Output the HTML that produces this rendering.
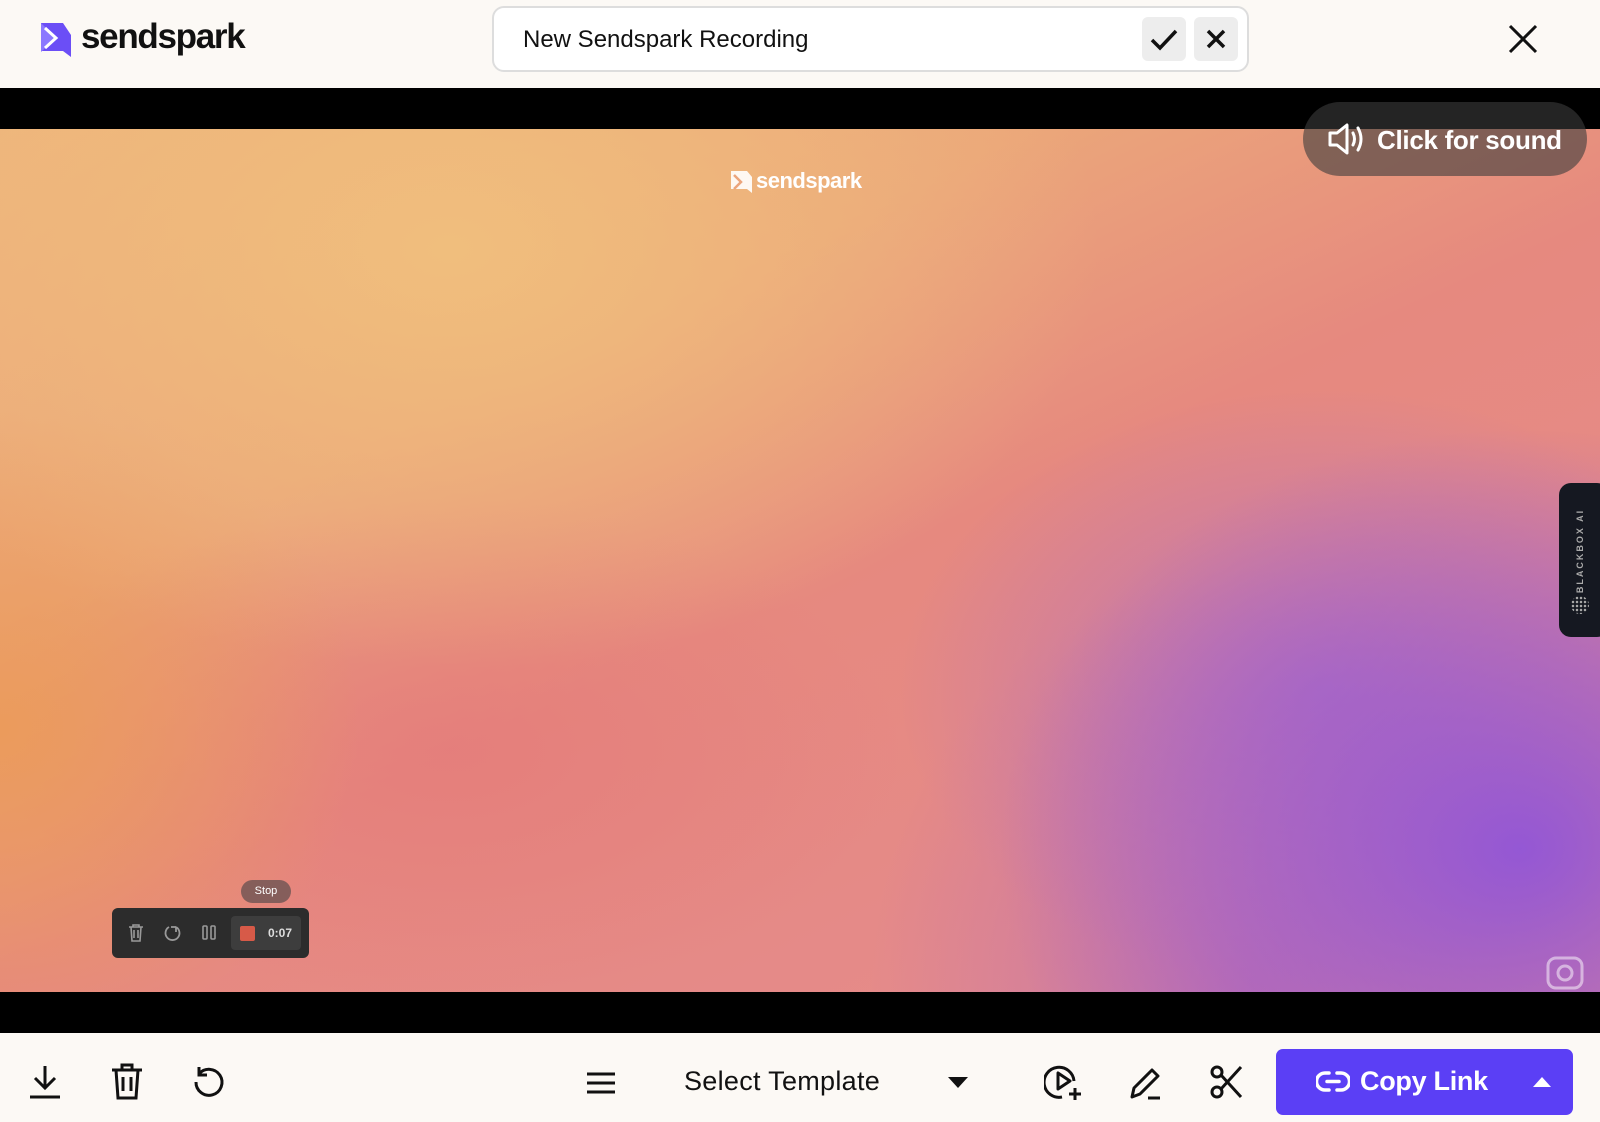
<!DOCTYPE html>
<html><head><meta charset="utf-8"><style>
*{margin:0;padding:0;box-sizing:border-box}
body{width:1600px;height:1122px;overflow:hidden;background:#fcf9f5;font-family:"Liberation Sans",sans-serif;position:relative}
.abs{position:absolute}
.hdr{left:0;top:0;width:1600px;height:88px;background:#fcf9f5}
.video{left:0;top:88px;width:1600px;height:945px;background:#000}
.grad{left:0;top:129px;width:1600px;height:863px;
background:
radial-gradient(ellipse 520px 420px at 1520px 720px,rgba(145,85,215,.95),rgba(150,90,210,0) 100%),
radial-gradient(ellipse 420px 300px at 1320px 560px,rgba(175,110,195,.8),rgba(175,110,195,0) 100%),
radial-gradient(ellipse 380px 420px at 1250px 860px,rgba(180,105,185,.7),rgba(180,105,185,0) 100%),
radial-gradient(ellipse 650px 420px at 450px 120px,rgba(240,190,125,1),rgba(240,190,125,0) 100%),
radial-gradient(ellipse 360px 320px at 0px 600px,rgba(235,155,90,.95),rgba(235,155,95,0) 100%),
radial-gradient(ellipse 450px 250px at 450px 620px,rgba(228,122,122,.7),rgba(228,125,128,0) 100%),
linear-gradient(155deg,#eeb47c 0%,#eba67a 30%,#e6897f 52%,#e58a88 75%,#e88f8c 100%)}
.bot{left:0;top:1033px;width:1600px;height:89px;background:#fcf9f5}
svg{position:absolute}
</style></head><body>
<div class="abs hdr"></div>
<svg style="left:40px;top:22px" width="32" height="36" viewBox="0 0 32 36"><path d="M1 1h22l8 12v22l-8-6H1z" fill="#6b4ef6"/><path d="M1 1l15 15L1 30z" fill="#8b78ff"/><path d="M5 6l11 10L5 26" fill="none" stroke="#fff" stroke-width="3"/></svg>
<div class="abs" style="left:81px;top:17px;font-size:35px;font-weight:bold;color:#111;letter-spacing:-1.3px">sendspark</div>
<div class="abs" style="left:492px;top:6px;width:757px;height:66px;border:2px solid #ddd;border-radius:12px;background:#fff"></div>
<div class="abs" style="left:523px;top:26px;font-size:24px;color:#111">New Sendspark Recording</div>
<div class="abs" style="left:1142px;top:17px;width:44px;height:44px;background:#ededed;border-radius:6px"></div>
<svg style="left:1149px;top:25px" width="30" height="30"><path d="M3 15l8 8L27 6" fill="none" stroke="#111" stroke-width="3.5"/></svg>
<div class="abs" style="left:1194px;top:17px;width:44px;height:44px;background:#ededed;border-radius:6px"></div>
<svg style="left:1205px;top:28px" width="22" height="22"><path d="M3 3l16 16M19 3L3 19" stroke="#111" stroke-width="3.5"/></svg>
<svg style="left:1508px;top:24px" width="30" height="30"><path d="M2 2l26 26M28 2L2 28" stroke="#111" stroke-width="3"/></svg>

<div class="abs video"></div>
<div class="abs grad"></div>
<svg style="left:731px;top:171px" width="22" height="22"><path d="M0 0h16l5 6v16l-5-4H0z" fill="#fff" opacity=".9"/><path d="M3 4l7 7-7 7" fill="none" stroke="#eba57c" stroke-width="2.5"/></svg>
<div class="abs" style="left:756px;top:168px;font-size:22px;font-weight:bold;color:#fff;letter-spacing:-0.5px">sendspark</div>
<div class="abs" style="left:1303px;top:102px;width:284px;height:74px;border-radius:37px;background:rgba(60,60,60,.6)"></div>
<svg style="left:1327px;top:121px" width="40" height="36" viewBox="0 0 40 36"><path d="M3 12h7l10-8v28l-10-8H3z" fill="none" stroke="#fff" stroke-width="3" stroke-linejoin="round"/><path d="M26 12q3 6 0 12M31 7q6 11 0 22" fill="none" stroke="#fff" stroke-width="3" stroke-linecap="round"/></svg>
<div class="abs" style="left:1377px;top:125px;font-size:26px;font-weight:bold;color:#fff;letter-spacing:-0.3px">Click for sound</div>
<div class="abs" style="left:1559px;top:483px;width:50px;height:154px;border-radius:12px;background:#151821"></div>
<div class="abs" style="left:1535px;top:546px;width:90px;font-size:9px;font-weight:bold;color:#aaa;letter-spacing:2px;transform:rotate(-90deg);text-align:center">BLACKBOX AI</div>
<div class="abs" style="left:1571px;top:596px;width:18px;height:18px;border-radius:50%;background:radial-gradient(circle,#aaa 1px,transparent 1.5px) 0 0/4px 4px"></div>
<svg style="left:1546px;top:956px" width="38" height="34"><rect x="2" y="2" width="34" height="30" rx="8" fill="none" stroke="rgba(255,255,255,.5)" stroke-width="3"/><circle cx="19" cy="17" r="7" fill="none" stroke="rgba(255,255,255,.5)" stroke-width="3"/></svg>

<div class="abs" style="left:241px;top:880px;width:50px;height:23px;border-radius:12px;background:rgba(100,80,80,.75);color:#fff;font-size:11px;text-align:center;line-height:23px">Stop</div>
<div class="abs" style="left:112px;top:908px;width:197px;height:50px;border-radius:6px;background:#2c2c2c"></div>
<div class="abs" style="left:231px;top:916px;width:70px;height:34px;border-radius:4px;background:#3d3d3d"></div>
<svg style="left:126px;top:923px" width="20" height="20"><path d="M3 4h14M7 4V2h6v2M5 4l1 14h8l1-14M8 7v8M12 7v8" fill="none" stroke="#999" stroke-width="1.6"/></svg>
<svg style="left:162px;top:923px" width="20" height="20"><path d="M14 4a7 7 0 1 1-7 0M14 4v5M14 4h-5" fill="none" stroke="#999" stroke-width="1.8"/></svg>
<svg style="left:200px;top:924px" width="18" height="18"><rect x="3" y="2" width="4" height="13" rx="1" fill="none" stroke="#999" stroke-width="1.6"/><rect x="11" y="2" width="4" height="13" rx="1" fill="none" stroke="#999" stroke-width="1.6"/></svg>
<div class="abs" style="left:240px;top:926px;width:15px;height:15px;background:#d75a48;border-radius:2px"></div>
<div class="abs" style="left:268px;top:926px;font-size:12px;font-weight:bold;color:#ddd">0:07</div>

<div class="abs bot"></div>
<svg style="left:28px;top:1064px" width="34" height="36"><path d="M17 2v22M7 14l10 10 10-10M2 33h30" fill="none" stroke="#111" stroke-width="3"/></svg>
<svg style="left:110px;top:1063px" width="34" height="38"><path d="M2 7h30M12 7V2h10v5M6 7l2 28h18l2-28M13 14v14M21 14v14" fill="none" stroke="#111" stroke-width="3"/></svg>
<svg style="left:191px;top:1064px" width="36" height="36"><path d="M8 10a13 13 0 1 1-3 8M8 3v8h8" fill="none" stroke="#111" stroke-width="3"/></svg>
<svg style="left:587px;top:1072px" width="28" height="22"><path d="M0 2h28M0 11h28M0 20h28" stroke="#111" stroke-width="3"/></svg>
<div class="abs" style="left:684px;top:1066px;font-size:27px;color:#111;letter-spacing:0.3px">Select Template</div>
<svg style="left:947px;top:1076px" width="22" height="14"><path d="M1 1h20L11 12z" fill="#111"/></svg>
<svg style="left:1044px;top:1062px" width="40" height="40"><path d="M30 19a15 15 0 1 0-12 16" fill="none" stroke="#111" stroke-width="3"/><path d="M14 11v16l12-8z" fill="none" stroke="#111" stroke-width="3" stroke-linejoin="round"/><path d="M31 26v12M25 32h12" stroke="#111" stroke-width="3"/></svg>
<svg style="left:1128px;top:1065px" width="36" height="36"><path d="M4 32l2-9L24 5l6 6-18 18zM20 33h12" fill="none" stroke="#111" stroke-width="3" stroke-linejoin="round"/></svg>
<svg style="left:1209px;top:1064px" width="36" height="36"><circle cx="8" cy="8" r="5" fill="none" stroke="#111" stroke-width="3"/><circle cx="8" cy="28" r="5" fill="none" stroke="#111" stroke-width="3"/><path d="M12 11l20 22M12 25L32 3" stroke="#111" stroke-width="3"/></svg>
<div class="abs" style="left:1276px;top:1049px;width:297px;height:66px;border-radius:7px;background:#5b3ff5"></div>
<svg style="left:1316px;top:1070px" width="34" height="24"><path d="M13 3H9a8.5 8.5 0 0 0 0 17h4M21 3h4a8.5 8.5 0 0 1 0 17h-4M11 11.5h12" fill="none" stroke="#fff" stroke-width="3.5" stroke-linecap="round"/></svg>
<div class="abs" style="left:1360px;top:1066px;font-size:27px;font-weight:bold;color:#fff;letter-spacing:-0.3px">Copy Link</div>
<svg style="left:1532px;top:1075px" width="20" height="14"><path d="M1 12h18L10 2z" fill="#fff"/></svg>
</body></html>
